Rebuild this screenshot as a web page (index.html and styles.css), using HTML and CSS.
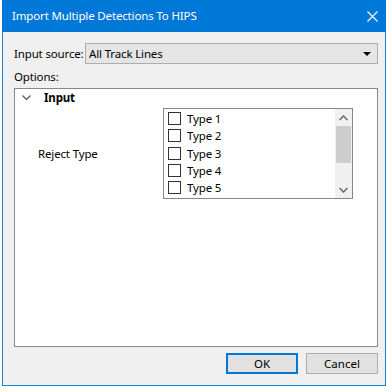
FILE: index.html
```html
<!DOCTYPE html>
<html lang="en">
<head>
    <meta charset="UTF-8">
    <title>Import Multiple Detections To HIPS</title>
    <link rel="stylesheet" href="styles.css">
</head>
<body>
    <div class="dialog">
        <div class="titlebar">
            <span class="title">Import Multiple Detections To HIPS</span>
            <svg class="close" width="11" height="11" viewBox="0 0 11 11">
                <path d="M0.5 0.5 L10.5 10.5 M10.5 0.5 L0.5 10.5" stroke="#fff" stroke-width="1.1" fill="none"/>
            </svg>
        </div>

        <div class="content">
            <div class="source-row">
                <label>Input source:</label>
                <div class="combo">
                    <span>All Track Lines</span>
                    <svg width="8" height="4" viewBox="0 0 8 4"><path d="M0 0 H8 L4 4 Z" fill="#000"/></svg>
                </div>
            </div>

            <div class="options-label">Options:</div>

            <div class="options">
                <div class="group">
                    <svg class="chevron" width="9" height="5" viewBox="0 0 9 5">
                        <path d="M0.5 0.5 L4.5 4.5 L8.5 0.5" stroke="#555" stroke-width="1.2" fill="none"/>
                    </svg>
                    <span>Input</span>
                </div>
                <div class="prop-row">
                    <div class="prop-name">Reject Type</div>
                    <div class="listbox">
                        <div class="items" id="items"></div>
                        <div class="scrollbar">
                            <svg width="9" height="6" viewBox="0 0 9 6"><path d="M0.5 5 L4.5 1 L8.5 5" stroke="#606060" stroke-width="1.3" fill="none"/></svg>
                            <div class="thumb"></div>
                            <div class="track"></div>
                            <svg width="9" height="6" viewBox="0 0 9 6"><path d="M0.5 1 L4.5 5 L8.5 1" stroke="#606060" stroke-width="1.3" fill="none"/></svg>
                        </div>
                    </div>
                </div>
            </div>

            <div class="buttons">
                <button class="default">OK</button>
                <button>Cancel</button>
            </div>
        </div>
    </div>

    <script>
        const types = ["Type 1", "Type 2", "Type 3", "Type 4", "Type 5"];
        const list = document.getElementById("items");
        for (const t of types) {
            const row = document.createElement("div");
            row.className = "item";
            row.innerHTML = '<span class="check"></span><span>' + t + '</span>';
            list.appendChild(row);
        }
    </script>
</body>
</html>
```

FILE: styles.css
```css
body {
    margin: 0;
    background: #fff;
    font-family: "Noto Sans", "Open Sans", sans-serif;
    font-size: 11.5px;
    letter-spacing: -0.15px;
    color: #000;
}

.dialog {
    margin-left: 2px;
    width: 384px;
    height: 386px;
    box-sizing: border-box;
    border: 1px solid #1883d7;
    border-top: none;
    background: #f0f0f0;
    display: flex;
    flex-direction: column;
}

.titlebar {
    height: 31px;
    margin: 0 -1px;
    background: #0078d7;
    color: #fff;
    display: flex;
    align-items: center;
    justify-content: space-between;
    padding: 0 8px 1px 10px;
    font-size: 11.5px;
}
.close {
    margin-top: 1px;
}

.content {
    flex: 1;
    display: flex;
    flex-direction: column;
    padding: 11px 7px 11px 11px;
}

.source-row {
    display: flex;
    align-items: center;
    height: 21px;
}
.source-row label {
    width: 71px;
    flex-shrink: 0;
    white-space: nowrap;
}
.combo {
    flex: 1;
    height: 21px;
    box-sizing: border-box;
    border: 1px solid #adadad;
    background: #e5e5e5;
    display: flex;
    align-items: center;
    justify-content: space-between;
    padding: 0 6px 0 3px;
}

.options-label {
    margin-top: 4px;
    height: 20px;
    line-height: 18px;
}

.options {
    height: 259px;
    box-sizing: border-box;
    border: 1px solid #828790;
    background: #fff;
}

.group {
    display: flex;
    align-items: center;
    height: 17px;
    font-weight: bold;
}
.chevron {
    margin: 0 13px 0 7px;
}

.prop-row {
    display: flex;
    align-items: center;
    margin-top: 2px;
}
.prop-name {
    width: 125px;
    padding-left: 23px;
}

.listbox {
    width: 190px;
    height: 91px;
    box-sizing: border-box;
    border: 1px solid #828790;
    display: flex;
}
.items {
    flex: 1;
    padding-top: 1px;
}
.item {
    display: flex;
    align-items: center;
    height: 17.25px;
    padding-left: 4px;
}
.check {
    width: 11px;
    height: 11px;
    border: 1px solid #333;
    margin-right: 6px;
}

.scrollbar {
    width: 17px;
    background: #f0f0f0;
    display: flex;
    flex-direction: column;
    align-items: center;
}
.scrollbar svg {
    margin: 6px 0 5px;
}
.thumb {
    width: 15px;
    height: 37px;
    background: #cdcdcd;
}
.track {
    flex: 1;
}

.buttons {
    margin-top: auto;
    display: flex;
    justify-content: flex-end;
    gap: 8px;
}
button {
    width: 72px;
    height: 21px;
    box-sizing: border-box;
    border: 1px solid #adadad;
    background: #e1e1e1;
    font-family: inherit;
    font-size: 11.5px;
    padding: 0;
}
button.default {
    border: 2px solid #0078d7;
}
```
